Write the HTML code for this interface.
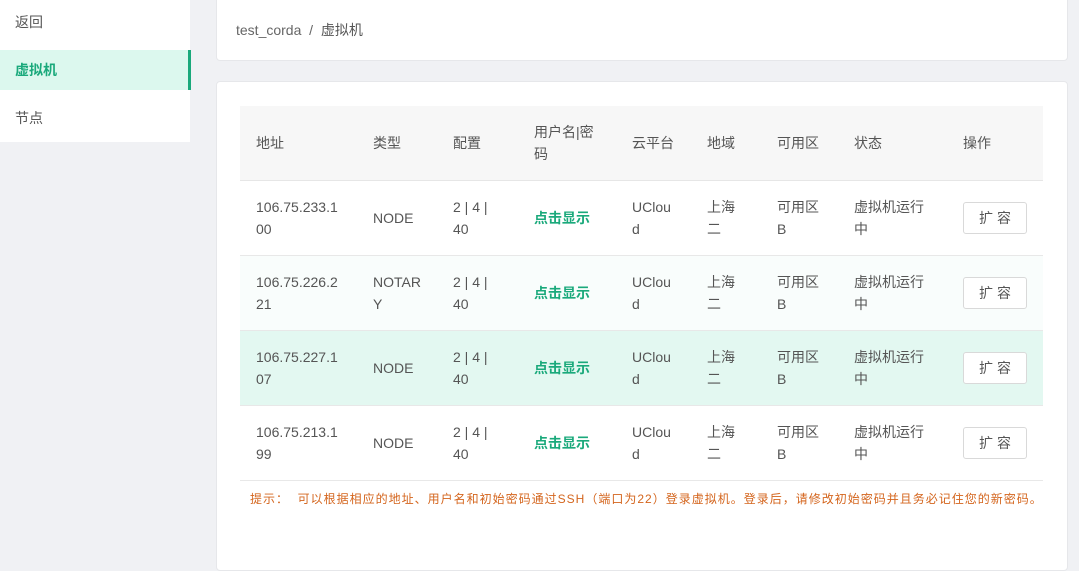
<!DOCTYPE html>
<html><head><meta charset="utf-8"><style>
*{margin:0;padding:0;box-sizing:border-box}
body{width:1079px;height:559px;background:#f0f1f4;font-family:"Liberation Sans","Noto Sans CJK SC",sans-serif;font-size:14px;color:#555;position:relative;overflow:hidden}
.side{position:absolute;left:0;top:0;width:190px;height:142px;background:#fff}
.si{position:absolute;left:15px;font-size:14px;color:#555}
.act{position:absolute;left:0;top:50px;width:191px;height:40px;background:#dcf8ee;border-right:3px solid #1aa97b}
.card{position:absolute;background:#fff;border-radius:4px;border:1px solid #e6e7ea}
.c{position:absolute;line-height:22px;color:#555}
.hd{position:absolute;left:240px;top:106px;width:803px;height:75px;background:#f7f7f7;border-bottom:1px solid #e6e6e6}
.row{position:absolute;left:240px;width:803px;height:75px;border-bottom:1px solid #e8e8e8}
.g{color:#1aa97b;font-weight:bold}
.btn{position:absolute;left:963px;width:64px;height:32px;border:1px solid #d9d9d9;border-radius:3px;background:#fff;text-align:center;line-height:30px;color:#555;letter-spacing:4px;padding-left:4px}
</style></head><body>
<div class="side">
<div class="si" style="top:12px">返回</div>
<div class="act"></div>
<div class="si" style="top:60px;color:#1aa97b;font-weight:bold">虚拟机</div>
<div class="si" style="top:108px">节点</div>
</div>
<div class="card" style="left:216px;top:-4px;width:852px;height:65px"></div>
<div class="c" style="left:236px;top:19px;color:#666">test_corda&nbsp;&nbsp;/&nbsp;&nbsp;<span style="color:#555">虚拟机</span></div>
<div class="card" style="left:216px;top:81px;width:852px;height:490px"></div>
<div class="hd"></div>
<div class="row" style="top:181px;background:#fff"></div>
<div class="row" style="top:256px;background:#f9fdfc"></div>
<div class="row" style="top:331px;background:#e3f8f1"></div>
<div class="row" style="top:406px;background:#fff"></div>
<div class="c" style="left:256px;top:132px">地址</div>
<div class="c" style="left:373px;top:132px">类型</div>
<div class="c" style="left:453px;top:132px">配置</div>
<div class="c" style="left:534px;top:121px;width:70px">用户名|密<br>码</div>
<div class="c" style="left:632px;top:132px">云平台</div>
<div class="c" style="left:707px;top:132px">地域</div>
<div class="c" style="left:777px;top:132px">可用区</div>
<div class="c" style="left:854px;top:132px">状态</div>
<div class="c" style="left:963px;top:132px">操作</div>

<div class="c" style="left:256px;top:196px">106.75.233.1<br>00</div>
<div class="c" style="left:373px;top:207px">NODE</div>
<div class="c" style="left:453px;top:196px">2 | 4 |<br>40</div>
<div class="c g" style="left:534px;top:207px">点击显示</div>
<div class="c" style="left:632px;top:196px">UClou<br>d</div>
<div class="c" style="left:707px;top:196px">上海<br>二</div>
<div class="c" style="left:777px;top:196px">可用区<br>B</div>
<div class="c" style="left:854px;top:196px">虚拟机运行<br>中</div>
<div class="btn" style="top:202px">扩容</div>

<div class="c" style="left:256px;top:271px">106.75.226.2<br>21</div>
<div class="c" style="left:373px;top:271px">NOTAR<br>Y</div>
<div class="c" style="left:453px;top:271px">2 | 4 |<br>40</div>
<div class="c g" style="left:534px;top:282px">点击显示</div>
<div class="c" style="left:632px;top:271px">UClou<br>d</div>
<div class="c" style="left:707px;top:271px">上海<br>二</div>
<div class="c" style="left:777px;top:271px">可用区<br>B</div>
<div class="c" style="left:854px;top:271px">虚拟机运行<br>中</div>
<div class="btn" style="top:277px">扩容</div>

<div class="c" style="left:256px;top:346px">106.75.227.1<br>07</div>
<div class="c" style="left:373px;top:357px">NODE</div>
<div class="c" style="left:453px;top:346px">2 | 4 |<br>40</div>
<div class="c g" style="left:534px;top:357px">点击显示</div>
<div class="c" style="left:632px;top:346px">UClou<br>d</div>
<div class="c" style="left:707px;top:346px">上海<br>二</div>
<div class="c" style="left:777px;top:346px">可用区<br>B</div>
<div class="c" style="left:854px;top:346px">虚拟机运行<br>中</div>
<div class="btn" style="top:352px">扩容</div>

<div class="c" style="left:256px;top:421px">106.75.213.1<br>99</div>
<div class="c" style="left:373px;top:432px">NODE</div>
<div class="c" style="left:453px;top:421px">2 | 4 |<br>40</div>
<div class="c g" style="left:534px;top:432px">点击显示</div>
<div class="c" style="left:632px;top:421px">UClou<br>d</div>
<div class="c" style="left:707px;top:421px">上海<br>二</div>
<div class="c" style="left:777px;top:421px">可用区<br>B</div>
<div class="c" style="left:854px;top:421px">虚拟机运行<br>中</div>
<div class="btn" style="top:427px">扩容</div>

<div class="c" style="left:250px;top:488px;font-size:12px;color:#d4651d;letter-spacing:1px;white-space:nowrap">提示：&nbsp;&nbsp;可以根据相应的地址、用户名和初始密码通过SSH（端口为22）登录虚拟机。登录后，请修改初始密码并且务必记住您的新密码。</div>
</body></html>
